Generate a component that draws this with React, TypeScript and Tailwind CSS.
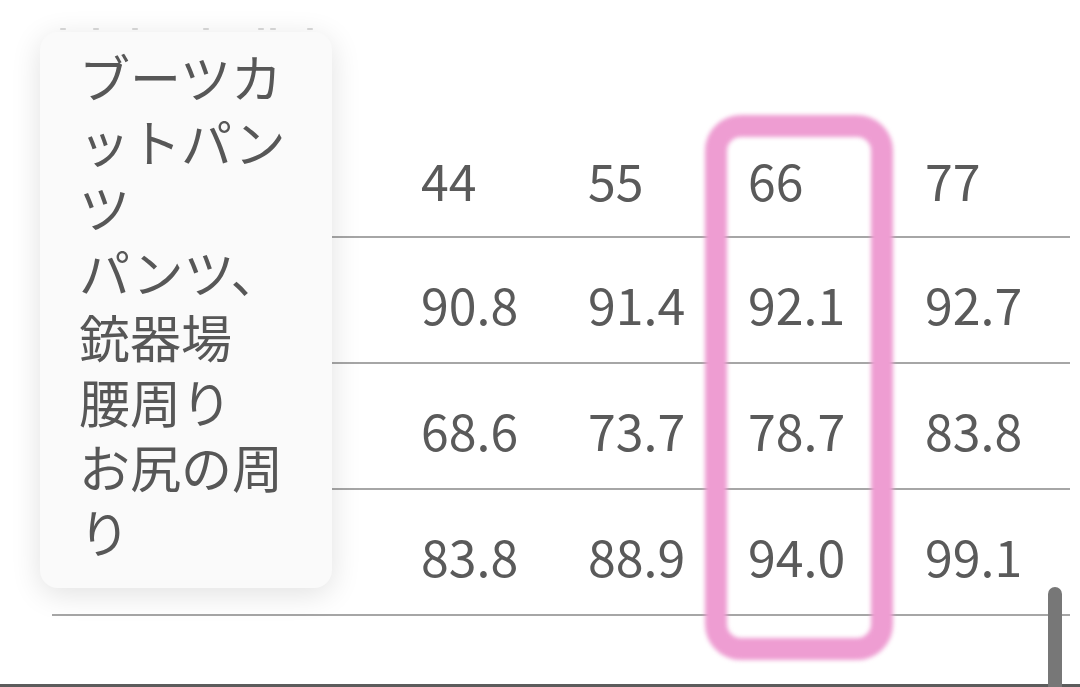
import React from 'react';

const header = ['44', '55', '66', '77'];
const rows = [
  ['90.8', '91.4', '92.1', '92.7'],
  ['68.6', '73.7', '78.7', '83.8'],
  ['83.8', '88.9', '94.0', '99.1'],
];
const colWidths = ['w-[167px]', 'w-[160px]', 'w-[177px]', 'w-[145px]'];

const label = 'ブーツカ\nットパン\nツ\nパンツ、\n銃器場\n腰周り\nお尻の周\nり';

// faint remains of a line of text scrolled out above
const marks = [60, 93, 132, 203, 258, 270, 307];

function Row({ cells, head }: { cells: string[]; head?: boolean }) {
  return (
    <div className="flex h-[126px] items-center border-b-2 border-[#a6a6a6]">
      <div className="w-[369px] shrink-0" />
      {cells.map((c, i) => (
        <div key={i} className={`${colWidths[i]} shrink-0 ${head ? 'pt-[10px]' : 'pt-[6px]'}`}>
          {c}
        </div>
      ))}
    </div>
  );
}

export default function App() {
  return (
    <div
      className="relative flex h-[687px] w-[1080px] flex-col overflow-hidden bg-white text-[#5a5a5a]"
      style={{ fontFamily: '"Noto Sans CJK JP", "Noto Sans", sans-serif' }}
    >
      <div className="relative h-[32px] shrink-0">
        {marks.map((x) => (
          <span
            key={x}
            className="absolute top-[28px] h-[2px] w-[6px] rounded-full bg-[#d9d9d9]"
            style={{ left: x }}
          />
        ))}
      </div>

      <div className="flex-1 pt-[80px]">
        <div className="ml-[52px] w-[1018px] text-[50px] leading-[60px]">
          <Row cells={header} head />
          {rows.map((r, i) => (
            <Row key={i} cells={r} />
          ))}
        </div>
      </div>

      <div className="h-[3px] shrink-0 bg-[#5c5c5c]" />

      {/* label popover */}
      <div className="absolute left-[40px] top-[32px] w-[292px] whitespace-pre-line rounded-[18px] bg-[#fafafa] pb-[24px] pl-[39px] pt-[12px] text-[51px] leading-[65px] text-[#575757] shadow-[0_6px_30px_rgba(0,0,0,0.12)]">
        {label}
      </div>

      {/* highlight */}
      <div className="pointer-events-none absolute left-[705px] top-[115px] h-[545px] w-[188px] rounded-[36px] border-[22px] border-[#ee9dd2] blur-[2px]" />

      {/* scrollbar */}
      <div className="absolute left-[1048px] top-[587px] h-[100px] w-[14px] rounded-t-full bg-[#777777]" />
    </div>
  );
}
